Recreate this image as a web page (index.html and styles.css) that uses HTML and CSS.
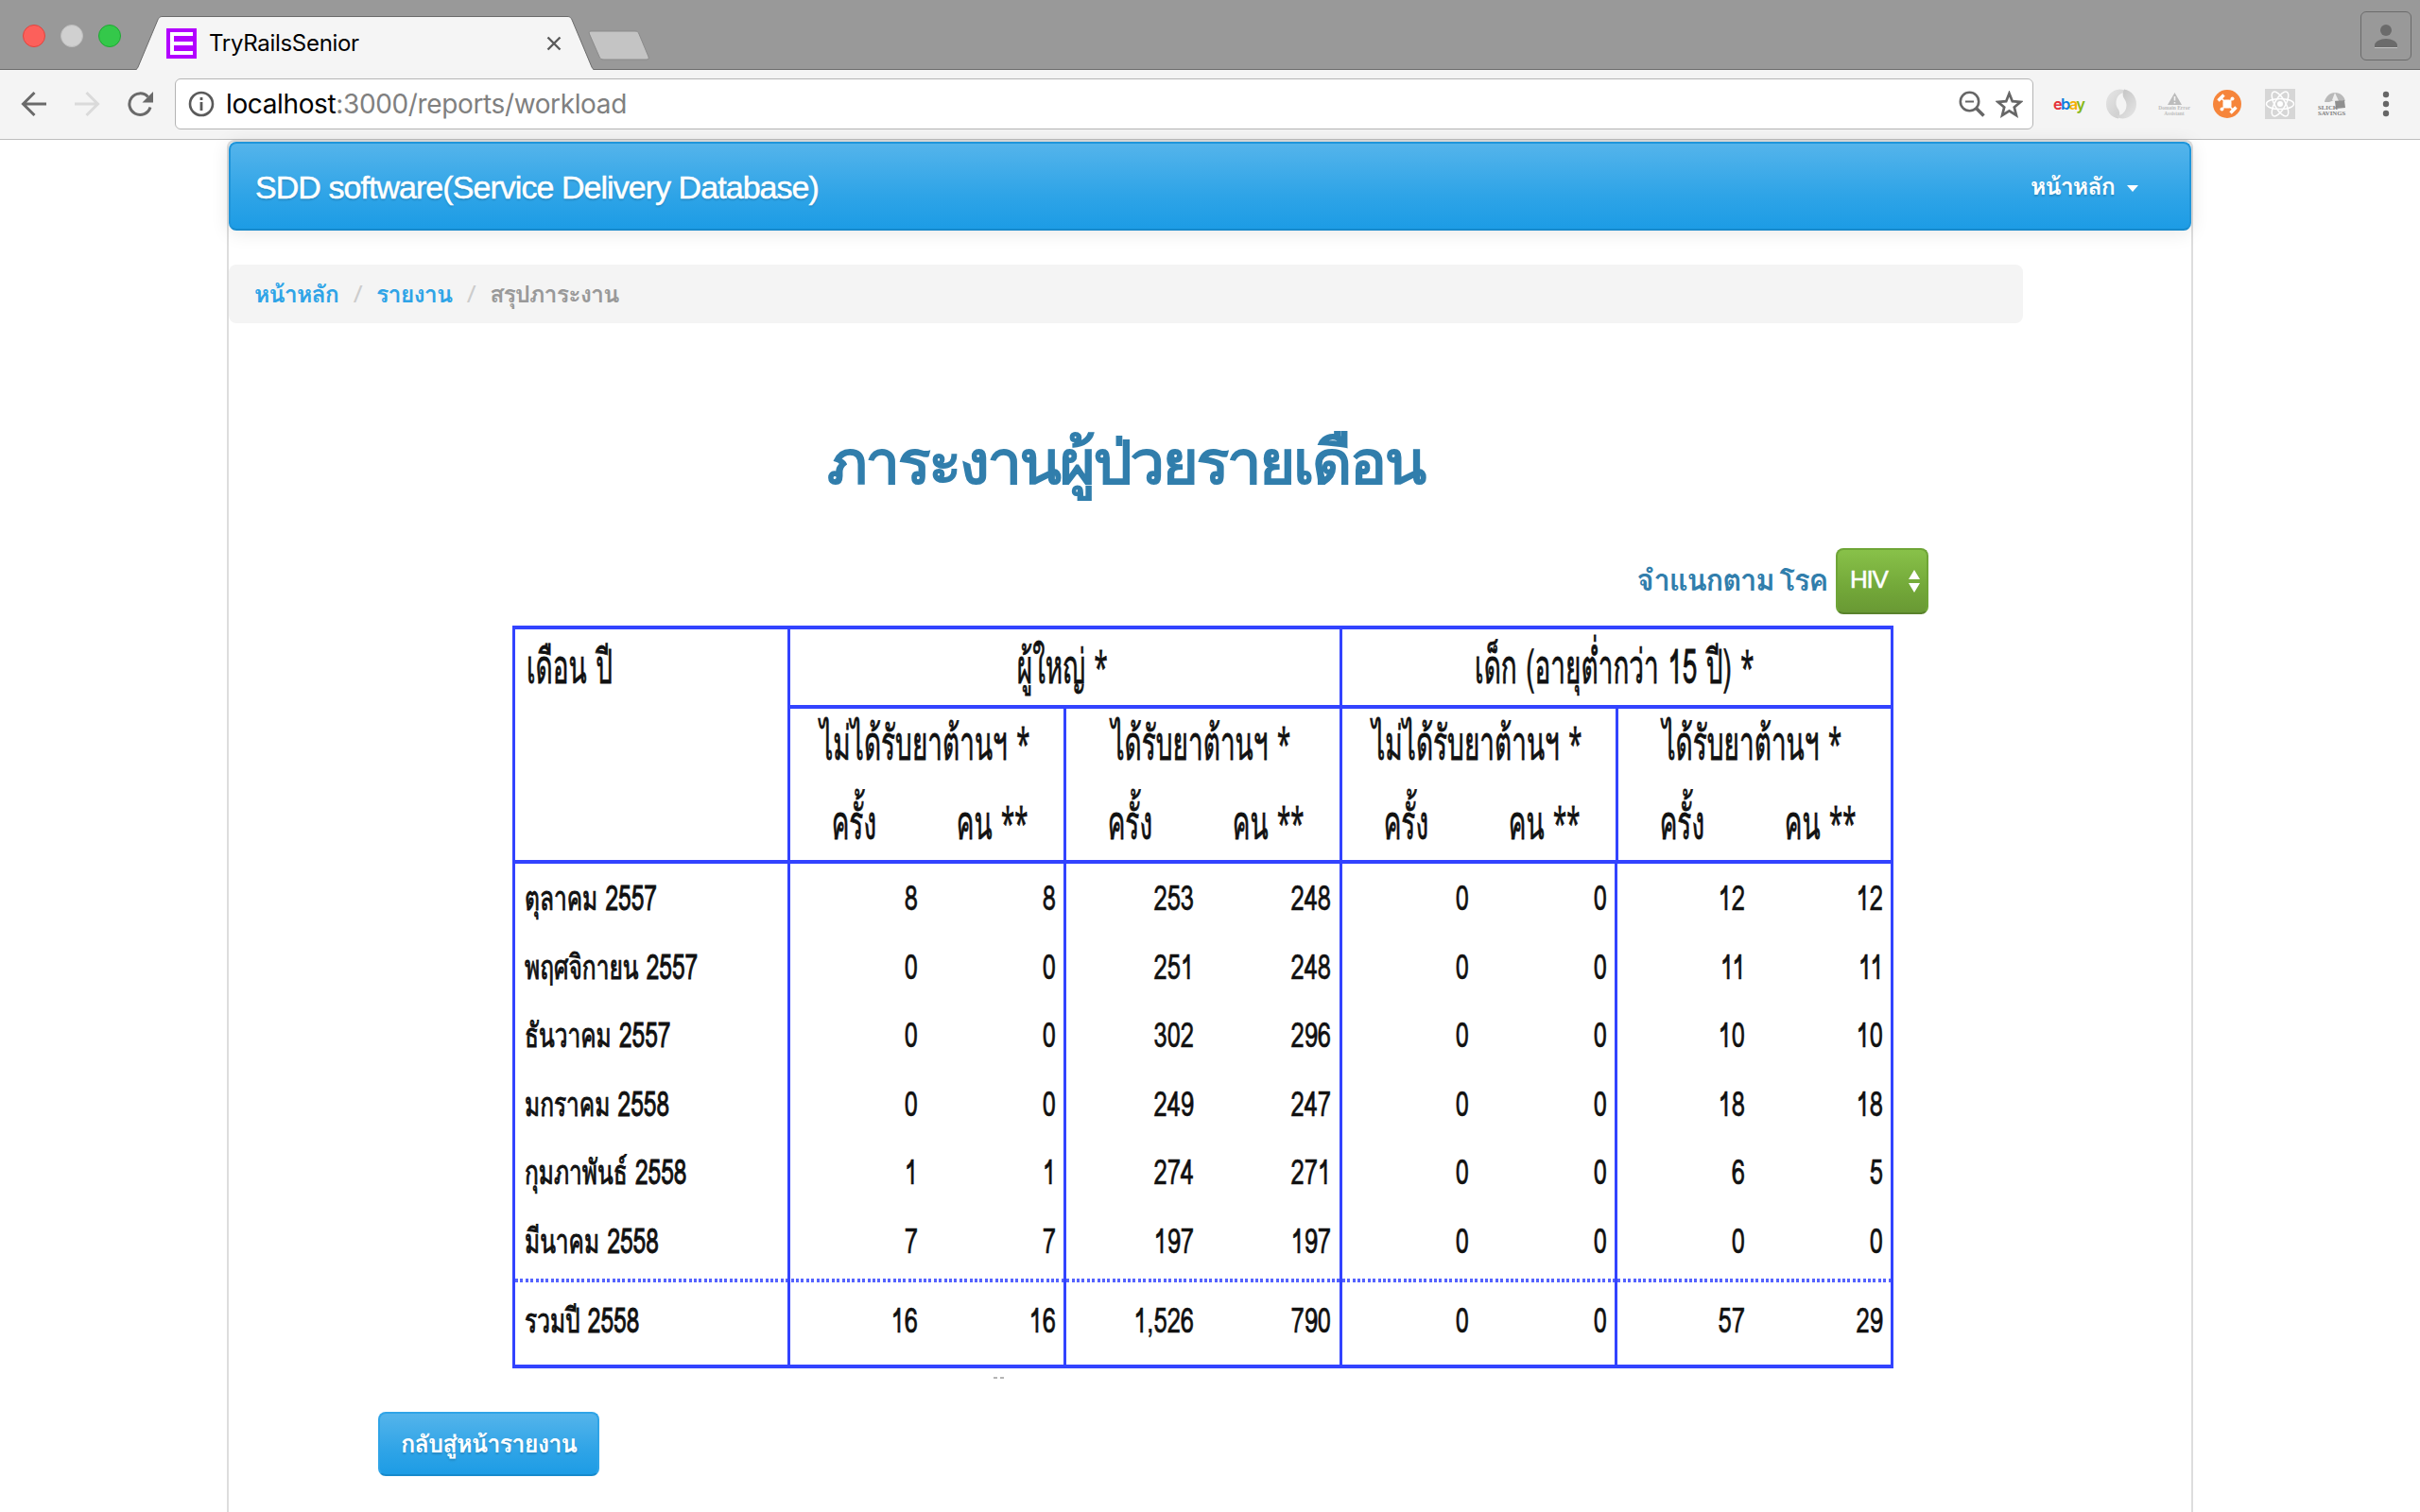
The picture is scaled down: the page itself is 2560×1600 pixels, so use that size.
FILE: index.html
```html
<!DOCTYPE html>
<html lang="th">
<head>
<meta charset="utf-8">
<title>TryRailsSenior</title>
<link rel="stylesheet" href="styles.css">
</head>
<body>
<header class="tabstrip">
  <div class="lights"><i class="light red"></i><i class="light grey"></i><i class="light green"></i></div>
  <div class="tab">
    <svg class="tab-shape" viewBox="0 0 484 57" width="484" height="57"><path d="M0 57 C1 56 1.500 55 2 54 L22.500 5 C24 1.500 25 .5 28 .5 H456 C459 .5 460 1.500 461.500 5 L482 54 C482.500 55 483 56 484 57 Z" fill="#f5f5f5"/><path d="M0 56.500 C1 56 1.500 55 2 54 L22.500 5 C24 1.500 25 .5 28 .5 H456 C459 .5 460 1.500 461.500 5 L482 54 C482.500 55 483 56 484 56.500" fill="none" stroke="#6b6b6b"/></svg>
    <svg class="favicon" viewBox="0 0 32 32" width="32" height="32"><path fill="#b200ff" d="M0 0h32v32H0z"/><path fill="#fff" d="M4 4h24v4H8v6h20v4H8v6h20v4H4z"/></svg>
    <span class="tab-title">TryRailsSenior</span>
    <svg class="tab-close" viewBox="0 0 16 16" width="16" height="16"><path d="M1.500 1.500l13 13M14.500 1.500l-13 13" stroke="#5a5a5a" stroke-width="2.400"/></svg>
  </div>
  <svg class="newtab" viewBox="0 0 66 32" width="66" height="32"><path d="M3 1h47c2 0 3 .6 4 3l10 24c.7 2-.3 3-2 3H17c-3 0-4-.6-5-3L1.500 4C.8 2 1.500 1 3 1z" fill="#c4c4c4" stroke="#8a8a8a"/></svg>
  <div class="profile"><svg viewBox="0 0 26 26" width="26" height="26"><circle cx="13" cy="7" r="6" fill="#6b6b6b"/><path d="M1 25v-2c0-4 6-7 12-7s12 3 12 7v2z" fill="#6b6b6b"/><path d="M1 25.500h24" stroke="#c2c2c2"/></svg></div>
</header>

<nav class="toolbar">
  <svg class="nav-ic" viewBox="0 0 28 28" width="28" height="28"><path d="M27 14H3M14.500 2L2.500 14l12 12" fill="none" stroke="#6a6a6a" stroke-width="3"/></svg>
  <svg class="nav-ic" viewBox="0 0 28 28" width="28" height="28"><path d="M1 14h24M13.500 2l12 12-12 12" fill="none" stroke="#dadada" stroke-width="3"/></svg>
  <svg class="nav-ic reload" viewBox="0 0 28 28" width="28" height="28"><path d="M25 17.500A11.300 11.300 0 1 1 22.500 6.500" fill="none" stroke="#6a6a6a" stroke-width="3"/><path d="M28 1v11.500H16.500z" fill="#6a6a6a"/></svg>
  <div class="address">
    <svg viewBox="0 0 28 28" width="28" height="28"><circle cx="14" cy="14" r="12" fill="none" stroke="#5a5a5a" stroke-width="2.600"/><path d="M14 12v9M14 7v3" stroke="#5a5a5a" stroke-width="2.800"/></svg>
    <span class="url"><b>localhost</b>:3000/reports/workload</span>
    <svg class="lens" viewBox="0 0 28 28" width="28" height="28"><circle cx="11.500" cy="11.500" r="9.700" fill="none" stroke="#666" stroke-width="2.600"/><path d="M7 11.500h9" stroke="#666" stroke-width="2"/><path d="M18.500 18.500l8 8" stroke="#666" stroke-width="3.600"/></svg>
    <svg viewBox="0 0 28 28" width="29" height="29"><path d="M14 2.800l3.200 8 8.400.6-6.500 5.400 2.100 8.300-7.200-4.500-7.200 4.500 2.100-8.300L2.400 11.400l8.400-.6z" fill="none" stroke="#666" stroke-width="2.600"/></svg>
  </div>
  <div class="exts">
    <div class="ebay"><span class="e">e</span><span class="b">b</span><span class="a">a</span><span class="y">y</span></div>
    <svg viewBox="0 0 32 32" width="32" height="32"><defs><linearGradient id="g" x1="0" x2="1" y1="0" y2="1"><stop offset="0" stop-color="#e6e6e6"/><stop offset="1" stop-color="#c8c8c8"/></linearGradient><linearGradient id="h" x1="0" x2="1" y1="0" y2="1"><stop offset="0" stop-color="#bdbdbd"/><stop offset="1" stop-color="#e8e8e8"/></linearGradient></defs><path d="M13 31.500C5 30 0 23.500 0 16 0 7.500 6 1 14 .5c4 0 7 1.500 9 4-7-2-12.500 3-12.500 10.500C10.500 22 17 22 13 31.500z" fill="url(#g)"/><path d="M19 .5C27 2 32 8.500 32 16c0 8.500-6 15-14 15.500-4 0-7-1.500-9-4 7 2 12.500-3 12.500-10.500C21.500 10 15 10 19 .5z" fill="url(#h)"/></svg>
    <div class="domain"><svg viewBox="0 0 15 13" width="15" height="13"><path d="M7.500 0L15 13H0z" fill="#bcbcbc"/><path d="M7.500 4v4.500M7.500 10v1.600" stroke="#f4f4f4" stroke-width="1.600"/></svg><span>Domain Error</span><span>Assistant</span></div>
    <svg viewBox="0 0 32 32" width="32" height="32"><circle cx="16" cy="16" r="15" fill="#f6853b"/><rect x="11.500" y="11.500" width="9" height="9" rx="2.500" fill="#fff"/><g stroke="#fff" stroke-width="1.600"><path d="M10 10l12 12M22 10L10 22"/></g><g fill="#fff"><circle cx="21.500" cy="10.500" r="2"/><circle cx="10.500" cy="21.500" r="2"/></g><g stroke="#fff" stroke-width="3.400"><path d="M6.500 12.500l6-6M19.500 25.500l6-6"/></g></svg>
    <svg viewBox="0 0 32 32" width="32" height="32"><path d="M0 0h32v32H0z" fill="#d6d6d6"/><g fill="none" stroke="#fff" stroke-width="1.500"><ellipse cx="16" cy="16" rx="14.500" ry="5.600"/><ellipse cx="16" cy="16" rx="14.500" ry="5.600" transform="rotate(60 16 16)"/><ellipse cx="16" cy="16" rx="14.500" ry="5.600" transform="rotate(120 16 16)"/></g><circle cx="16" cy="16" r="3" fill="#fff"/></svg>
    <div class="slick"><svg viewBox="0 0 30 18" width="30" height="18"><path d="M7 11C8 5 13 1 18 1c6 0 10 4 11 9l-3-1-4 2-5-2-5 2z" fill="#b9b9b9"/><path d="M15 9l3-8 4 9z" fill="#eee"/><path d="M18 10l10-1 1 8-10 1z" fill="#8f8f8f"/></svg><span>SLICK</span><span>SAVINGS</span></div>
    <svg class="menu" viewBox="0 0 8 28" width="8" height="28"><g fill="#666"><circle cx="4" cy="4" r="3.200"/><circle cx="4" cy="14" r="3.200"/><circle cx="4" cy="24" r="3.200"/></g></svg>
  </div>
</nav>

<main class="page">
  <div class="navbar">
    <span class="brand">SDD software(Service Delivery Database)</span>
    <span class="navlink">หน้าหลัก</span><i class="caret"></i>
  </div>
  <div class="breadcrumb"><a>หน้าหลัก</a><i>/</i><a>รายงาน</a><i>/</i><span>สรุปภาระงาน</span></div>
  <h1>ภาระงานผู้ป่วยรายเดือน</h1>
  <div class="filter">
    <label>จำแนกตาม<span class="gap">โรค</span></label>
    <div class="select"><span>HIV</span><svg viewBox="0 0 12 24" width="12" height="24"><path d="M6 0l6 10H0zM6 24L0 14h12z" fill="#fff"/></svg></div>
  </div>
  <div class="report">
    <div class="head">
      <div class="cell corner"><span>เดือน ปี</span></div>
      <div class="cell wide"><span>ผู้ใหญ่ <b>*</b></span></div>
      <div class="cell wide"><span>เด็ก (อายุต่ำกว่า 15 ปี) <b>*</b></span></div>
      <div class="group"><div class="cell"><span>ไม่ได้รับยาต้านฯ <b>*</b></span></div><div class="pair"><span>ครั้ง</span><span>คน <b>**</b></span></div></div>
      <div class="group"><div class="cell"><span>ได้รับยาต้านฯ <b>*</b></span></div><div class="pair"><span>ครั้ง</span><span>คน <b>**</b></span></div></div>
      <div class="group"><div class="cell"><span>ไม่ได้รับยาต้านฯ <b>*</b></span></div><div class="pair"><span>ครั้ง</span><span>คน <b>**</b></span></div></div>
      <div class="group"><div class="cell"><span>ได้รับยาต้านฯ <b>*</b></span></div><div class="pair"><span>ครั้ง</span><span>คน <b>**</b></span></div></div>
    </div>
    <div class="body">
      <div class="row"><p><span>ตุลาคม 2557</span></p><p><span>8</span></p><p><span>8</span></p><p><span>253</span></p><p><span>248</span></p><p><span>0</span></p><p><span>0</span></p><p><span>12</span></p><p><span>12</span></p></div>
      <div class="row"><p><span>พฤศจิกายน 2557</span></p><p><span>0</span></p><p><span>0</span></p><p><span>251</span></p><p><span>248</span></p><p><span>0</span></p><p><span>0</span></p><p><span>11</span></p><p><span>11</span></p></div>
      <div class="row"><p><span>ธันวาคม 2557</span></p><p><span>0</span></p><p><span>0</span></p><p><span>302</span></p><p><span>296</span></p><p><span>0</span></p><p><span>0</span></p><p><span>10</span></p><p><span>10</span></p></div>
      <div class="row"><p><span>มกราคม 2558</span></p><p><span>0</span></p><p><span>0</span></p><p><span>249</span></p><p><span>247</span></p><p><span>0</span></p><p><span>0</span></p><p><span>18</span></p><p><span>18</span></p></div>
      <div class="row"><p><span>กุมภาพันธ์ 2558</span></p><p><span>1</span></p><p><span>1</span></p><p><span>274</span></p><p><span>271</span></p><p><span>0</span></p><p><span>0</span></p><p><span>6</span></p><p><span>5</span></p></div>
      <div class="row"><p><span>มีนาคม 2558</span></p><p><span>7</span></p><p><span>7</span></p><p><span>197</span></p><p><span>197</span></p><p><span>0</span></p><p><span>0</span></p><p><span>0</span></p><p><span>0</span></p></div>
      <div class="row total"><p><span>รวมปี 2558</span></p><p><span>16</span></p><p><span>16</span></p><p><span>1,526</span></p><p><span>790</span></p><p><span>0</span></p><p><span>0</span></p><p><span>57</span></p><p><span>29</span></p></div>
    </div>
  </div>
  <div class="specks"><i></i><i></i></div>
  <a class="back">กลับสู่หน้ารายงาน</a>
</main>
</body>
</html>
```
FILE: styles.css
```css
* { box-sizing: border-box; }
html, body { margin: 0; }
body { width: 2560px; height: 1600px; overflow: hidden; background: #fff; font-family: "Loma", "Liberation Sans", sans-serif; display: flex; flex-direction: column; }
svg { display: block; flex: none; }
i { font-style: normal; }

/* browser chrome */
.tabstrip { height: 74px; flex: none; background: #999; border-bottom: 1px solid #6b6b6b; display: flex; }
.lights { display: flex; gap: 16px; padding: 26px 0 0 24px; width: 144px; }
.light { width: 24px; height: 24px; border-radius: 50%; border: 1px solid; }
.red { background: #fc605b; border-color: #e0443e; }
.grey { background: #d0d0d0; border-color: #bdbdbd; }
.green { background: #34c84a; border-color: #1fa833; }
.tab { position: relative; width: 484px; margin-top: 17px; height: 57px; display: flex; align-items: flex-start; padding: 13px 34px 0 32px; }
.tab-shape { position: absolute; left: 0; top: 0; }
.favicon, .tab-title, .tab-close { position: relative; }
.tab-title { flex: 1; margin-left: 13px; font: 24px/32px Inter, sans-serif; letter-spacing: -.3px; }
.tab-close { margin: 8px 0 0; }
.newtab { margin: 32px 0 0 -6px; }
.profile { margin: 12px 9px 0 auto; width: 54px; height: 52px; border: 1px solid #6b6b6b; border-radius: 6px; display: flex; align-items: center; justify-content: center; }
.toolbar { height: 74px; flex: none; background: #f4f4f4; border-bottom: 1px solid #bdbdbd; display: flex; align-items: center; padding: 0 0 1px 22px; }
.nav-ic { margin-right: 28px; }
.reload { margin-right: 23px; }
.address { width: 1966px; height: 54px; background: #fff; border: 1px solid #b4b4b4; border-radius: 6px; display: flex; align-items: center; padding: 0 10px 0 13px; }
.url { flex: 1; margin-left: 12px; font: 28px/40px Inter, sans-serif; letter-spacing: -.37px; color: #808080; }
.url b { font-weight: 400; color: #000; }
.lens { margin-right: 11px; }
.exts { display: flex; align-items: center; gap: 24px; margin-left: 21px; }
.exts > * { width: 32px; }
.exts > .menu { width: 8px; margin-left: 12px; }
.ebay { font: 600 16.500px/20px Inter, sans-serif; letter-spacing: -1.700px; white-space: nowrap; }
.e { color: #e53238; }
.b { color: #0b7ee0; }
.a { color: #f5af02; }
.y { color: #86b817; }
.domain, .slick { display: flex; flex-direction: column; align-items: center; font-family: "Liberation Serif", serif; font-weight: 700; white-space: nowrap; }
.domain { color: #bcbcbc; font-size: 5.500px; line-height: 6px; }
.slick { color: #808080; align-items: flex-start; font-size: 6.800px; line-height: 6px; }
.slick svg { margin-bottom: -4px; }

/* page */
.page { width: 2080px; flex: 1; margin: 0 auto; border: 2px solid #ddd; border-bottom: 0; border-radius: 8px 8px 0 0; }
.navbar { height: 94px; border: 2px solid #1f95da; border-bottom-color: #178acc; border-radius: 8px; background: linear-gradient(#54b4eb, #2fa4e7 60%, #1d9ce5); box-shadow: 0 2px 20px rgba(0,0,0,.1); display: flex; align-items: flex-start; padding: 0 54px 0 26px; color: #fff; text-shadow: 0 2px 2px rgba(0,0,0,.15); }
.brand { flex: 1; font: 34px/92px "Liberation Sans", sans-serif; letter-spacing: -.95px; -webkit-text-stroke: .5px #fff; }
.navlink { font-weight: 700; font-size: 25px; letter-spacing: -.9px; line-height: 90px; }
.caret { margin: 44px 0 0 13px; border: 6px solid transparent; border-top: 7px solid #fff; border-bottom: 0; }
.breadcrumb { width: 1898px; height: 62px; margin-top: 36px; border-radius: 8px; background: #f4f4f4; display: flex; padding-left: 27px; font-weight: 700; font-size: 25px; letter-spacing: -.9px; line-height: 63px; color: #999; }
.breadcrumb a { color: #2fa4e7; }
.breadcrumb i { width: 40px; text-align: center; color: #ccc; font-weight: 400; }
h1 { margin: 98px 0 0 633px; font-weight: 400; font-size: 65px; letter-spacing: -2.300px; line-height: 98px; height: 100px; color: #317eac; white-space: nowrap; -webkit-text-stroke: 2.200px #317eac; }
.filter { display: flex; justify-content: flex-end; align-items: center; margin: 40px 278px 0 0; height: 70px; }
label { font-weight: 700; font-size: 31px; letter-spacing: -1.200px; line-height: 60px; height: 62px; color: #317eac; margin-right: 9px; }
.gap { margin-left: 6px; }
.select { width: 98px; height: 70px; border: 2px solid #6fa537; border-bottom-color: #59822c; border-radius: 8px; background: linear-gradient(#88c149, #73a839 60%, #699934); display: flex; align-items: center; justify-content: space-between; padding: 0 7px 0 13px; color: #fff; font: 26px/60px "Liberation Sans", sans-serif; letter-spacing: -1.300px; -webkit-text-stroke: .5px #fff; }
.select span { margin-bottom: 4px; }

/* monthly workload report */
.report { width: 1461px; height: 786px; margin: 12px 0 0 300px; border: solid #3243ff; border-width: 4px 3px; color: #111; }
.report span { display: block; flex: none; white-space: nowrap; }
.head { display: grid; grid-template-columns: 288px 292px 292px 292px 291px; grid-template-rows: 80px 164px; height: 248px; border-bottom: 4px solid #3243ff; font-size: 50px; }
.head > * + * { border-left: 3px solid #3243ff; }
.head span { transform: scaleX(.56); -webkit-text-stroke: .8px #111; }
.head b { font: 400 46px/0 "Noto Sans", sans-serif; }
.cell { display: flex; justify-content: center; line-height: 80px; padding-right: 5px; }
.corner { grid-row: 1 / 3; justify-content: flex-start; padding-left: 12px; }
.head .corner span { transform-origin: left; }
.wide { grid-column: span 2; }
.group { border-top: 4px solid #3243ff; }
.group .cell { height: 80px; line-height: 74px; }
.pair { display: grid; grid-template-columns: 134px 154px; justify-items: center; line-height: 82px; }
.pair span + span { margin-left: 6px; }
.row { display: grid; grid-template-columns: 288px repeat(8, 145.875px); height: 72.600px; font-size: 36px; }
.row p { margin: 0; display: flex; justify-content: flex-end; padding-right: 8px; line-height: 74px; }
.row p:first-child { justify-content: flex-start; padding-left: 10px; }
.row p:nth-child(even) { border-left: 3px solid #3243ff; }
.row span { transform: scaleX(.71); transform-origin: right; -webkit-text-stroke: .6px #111; }
.row p:first-child span { transform: scaleX(.68); transform-origin: left; -webkit-text-stroke: 1px #111; }
.row:nth-child(6) { height: 76px; }
.row.total { height: 91px; background: repeating-linear-gradient(90deg, #5563ff 0 3px, #fff 3px 5.400px) 0 0 / 100% 4px no-repeat; }
.total p { line-height: 90px; }
.specks { display: flex; gap: 3px; margin: 9px 0 0 809px; height: 2px; }
.specks i { width: 4px; background: #b5b5b5; }
.back { display: block; width: 234px; height: 68px; margin: 35px 0 0 158px; border: 2px solid #2fa4e7; border-bottom-color: #178acc; border-radius: 8px; background: linear-gradient(#54b4eb, #2fa4e7 60%, #1d9ce5); color: #fff; font-weight: 700; font-size: 25.400px; letter-spacing: -.9px; line-height: 64px; text-align: center; text-shadow: 0 2px 2px rgba(0,0,0,.15); }
```
